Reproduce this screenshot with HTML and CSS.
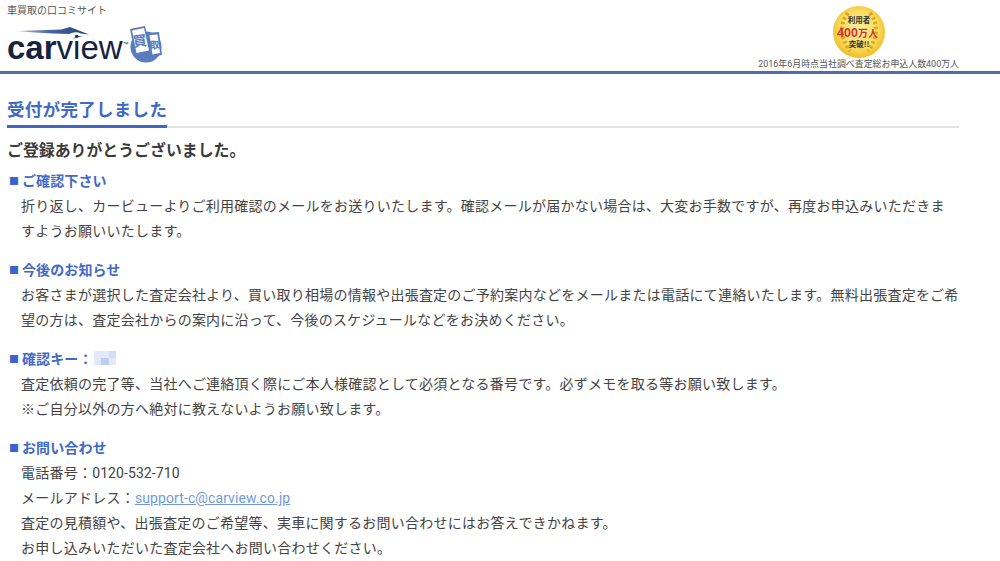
FILE: index.html
```html
<!DOCTYPE html>
<html lang="ja">
<head>
<meta charset="utf-8">
<title>受付が完了しました</title>
<link rel="stylesheet" href="styles.css">
</head>
<body>
<header class="site-header">
  <div class="brand">
    <p class="tagline">車買取の口コミサイト</p>
    <div class="logo">
      <svg class="logo-swoosh" width="76" height="16" viewBox="0 0 76 16">
        <defs><linearGradient id="sw" x1="0" x2="1" y1="0" y2="0"><stop offset="0" stop-color="#b9c6df"/><stop offset=".45" stop-color="#4a66a3"/><stop offset="1" stop-color="#24407c"/></linearGradient></defs>
        <path d="M0 5 L44 3.500 L53 1 L72 8.500 L64 7.500 Q58 5 52 8 L36 7.500 Q18 6.500 0 5Z" fill="url(#sw)"/>
        <path d="M56 13 Q60 8 66 11 Q61 10 56 13Z" fill="#24407c"/>
      </svg>
      <span class="logo-car">car</span><span class="logo-view">view</span><span class="logo-tm">™</span>
      <svg class="logo-mark" width="36" height="38" viewBox="0 0 36 38">
        <circle cx="19" cy="21" r="15.500" fill="#5a7bbf"/>
        <path d="M3 3 L18 0 L24 26 L8 29Z" fill="#5a7bbf"/>
        <path d="M5 4.500 L17 2 L22 24.500 L9.500 27Z" fill="#fff"/>
        <path d="M20 7 L32 6 L35 29 L24 31Z" fill="#5a7bbf"/>
        <path d="M22.500 9 L30.500 8.500 L33 27 L25.500 28.500Z" fill="#fff"/>
        <text class="mark-kanji" transform="translate(6.500 21) rotate(-8)">買</text>
        <text class="mark-kanji mark-small" transform="translate(23 23) rotate(-6)">取</text>
      </svg>
    </div>
  </div>
  <div class="badge-box">
    <svg class="badge" width="52" height="52" viewBox="0 0 52 52">
      <defs><radialGradient id="gold" cx=".5" cy=".45" r=".55"><stop offset="0" stop-color="#fdf0a4"/><stop offset=".65" stop-color="#f9dc60"/><stop offset="1" stop-color="#f0bd26"/></radialGradient></defs>
      <circle cx="26" cy="26" r="26" fill="url(#gold)"/>
      <path d="M15 7 Q2 24 17 45 M37 7 Q50 24 35 45" fill="none" stroke="#d9a722" stroke-width="4" stroke-dasharray="2.500 2.500"/>
      <text x="26" y="16.500" class="b-small">利用者</text>
      <text x="4" y="30.500" class="b-big">400</text>
      <text x="25" y="30.500" class="b-unit">万人</text>
      <text x="26" y="41" class="b-small">突破!!</text>
    </svg>
    <p class="badge-note">2016年6月時点当社調べ査定総お申込人数400万人</p>
  </div>
</header>

<main class="content">
  <div class="title-rule"><h1 class="page-title">受付が完了しました</h1></div>
  <p class="lead">ご登録ありがとうございました。</p>

  <section class="block">
    <h2 class="block-title"><span class="square">■</span>ご確認下さい</h2>
    <p class="block-text">折り返し、カービューよりご利用確認のメールをお送りいたします。確認メールが届かない場合は、大変お手数ですが、再度お申込みいただきま<br>すようお願いいたします。</p>
  </section>

  <section class="block">
    <h2 class="block-title"><span class="square">■</span>今後のお知らせ</h2>
    <p class="block-text">お客さまが選択した査定会社より、買い取り相場の情報や出張査定のご予約案内などをメールまたは電話にて連絡いたします。無料出張査定をご希望の方は、査定会社からの案内に沿って、今後のスケジュールなどをお決めください。</p>
  </section>

  <section class="block">
    <h2 class="block-title"><span class="square">■</span>確認キー：<span class="blur"></span></h2>
    <p class="block-text">査定依頼の完了等、当社へご連絡頂く際にご本人様確認として必須となる番号です。必ずメモを取る等お願い致します。<br>※ご自分以外の方へ絶対に教えないようお願い致します。</p>
  </section>

  <section class="block">
    <h2 class="block-title"><span class="square">■</span>お問い合わせ</h2>
    <p class="block-text">電話番号：<span class="tel">0120-532-710</span><br>メールアドレス：<a class="mail" href="#">support-c@carview.co.jp</a><br>査定の見積額や、出張査定のご希望等、実車に関するお問い合わせにはお答えできかねます。<br>お申し込みいただいた査定会社へお問い合わせください。</p>
  </section>
</main>
</body>
</html>
```
FILE: styles.css
```css
* { box-sizing: border-box; }
html, body { margin: 0; padding: 0; }
body {
  background: #fff;
  color: #444;
  font-family: Roboto, "Noto Sans CJK JP", sans-serif;
  font-size: 14px;
  overflow: hidden;
  height: 561px;
}
p, h1, h2 { margin: 0; }

.site-header {
  height: 74px;
  border-bottom: 3px solid #4f6ea8;
  display: flex;
  justify-content: space-between;
  padding: 4px 41px 0 7px;
}
.tagline { font-size: 10px; line-height: 13px; color: #555; }
.logo {
  position: relative;
  display: flex;
  align-items: baseline;
  margin-top: 9px;
  height: 44px;
  line-height: 44px;
  font-family: "Liberation Sans", sans-serif;
  color: #16233f;
}
.logo-swoosh { position: absolute; left: 10px; top: 0; }
.logo-car { font-size: 33px; font-weight: 700; }
.logo-view { font-size: 33px; }
.logo-tm { font-size: 6px; align-self: flex-start; margin-top: -4px; }
.logo-mark { position: absolute; left: 120px; top: 0; }
.mark-kanji { font-family: "Noto Sans CJK JP", sans-serif; font-size: 14px; font-weight: 700; fill: #5a7bbf; }
.mark-small { font-size: 10px; }

.badge-box { display: flex; flex-direction: column; align-items: flex-end; }
.badge { margin: 2px 74px 0 0; }
.badge-note { font-size: 8.930px; line-height: 11px; margin-top: 1px; color: #555; }
.b-small { font-family: "Noto Sans CJK JP", sans-serif; font-size: 7.500px; font-weight: 700; text-anchor: middle; fill: #333; }
.b-big { font-family: "Liberation Sans", sans-serif; font-size: 12.500px; font-weight: 700; fill: #d23030; }
.b-unit { font-family: "Noto Sans CJK JP", sans-serif; font-size: 10px; font-weight: 700; fill: #d23030; }

.content { padding: 23px 38px 0 7px; }
.title-rule { border-bottom: 2px solid #e2e2e2; height: 31px; margin-right: 3px; }
.page-title {
  display: inline-block;
  height: 31px;
  border-bottom: 3px solid #3f68c4;
  color: #4169c6;
  font-size: 17.500px;
  letter-spacing: 0.3px;
  line-height: 26px;
  font-weight: 700;
}
.lead { font-size: 15.900px; font-weight: 700; line-height: 24px; margin-top: 11px; color: #3a3a3a; }
.block { margin-top: 6px; }
.block + .block { margin-top: 14px; }
.block-title { font-size: 14px; letter-spacing: 0.1px; font-weight: 700; line-height: 25px; color: #4169c6; padding-left: 2px; display: flex; align-items: center; }
.square { font-size: 10px; width: 13px; color: #3a63cc; }
.block-text { padding-left: 14px; line-height: 25px; letter-spacing: 0.24px; color: #444; }
.tel { letter-spacing: 0.08px; }
.blur {
  display: inline-block;
  width: 22px;
  height: 14px;
  margin-left: 1px;
  margin-top: -3px;
  background:
    linear-gradient(#bccdf0, #bccdf0) 7px 7px / 8px 7px no-repeat,
    linear-gradient(#d3def5, #d3def5) 15px 0 / 7px 7px no-repeat,
    #e3e9f8;
}
.mail { color: #6f9ae0; letter-spacing: 0.1px; }
```
